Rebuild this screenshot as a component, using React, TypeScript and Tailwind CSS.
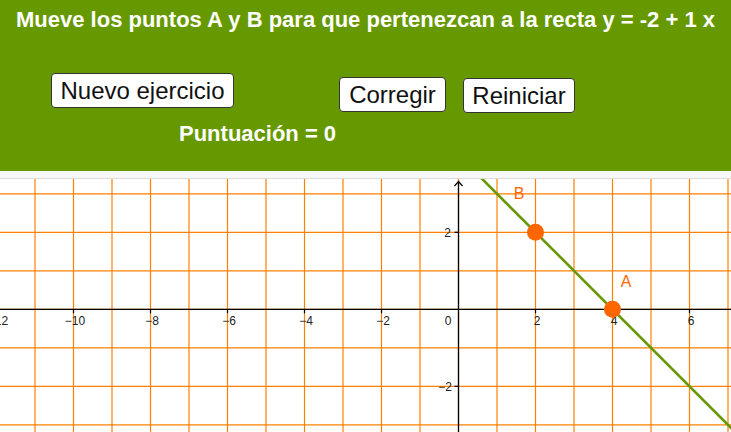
import React from 'react';

const U = 38.5;
const OX = 458.5;
const OY = 130.3;
const H = 253;

const px = (x: number) => OX + x * U;
const py = (y: number) => OY - y * U;

function Graph() {
  const xs = [];
  for (let k = -12; k <= 7; k++) xs.push(k);
  const ys = [];
  for (let k = -3; k <= 3; k++) ys.push(k);
  const xLabels = [-12, -10, -8, -6, -4, -2, 2, 4, 6];
  const yLabels = [2, -2];

  // drawn line through B(2,2) and A(4,0)
  const x1 = -1, x2 = 9;
  const y1 = 4 - x1, y2 = 4 - x2;

  return (
    <svg width="731" height={H} viewBox={`0 0 731 ${H}`} className="block">
      <rect x="0" y="0" width="731" height={H} fill="#ffffff" />
      {xs.map((k) => (
        <line key={'v' + k} x1={px(k)} y1="0" x2={px(k)} y2={H} stroke="#ff8000" strokeWidth="1.2" />
      ))}
      {ys.map((k) => (
        <line key={'h' + k} x1="0" y1={py(k)} x2="731" y2={py(k)} stroke="#ff8000" strokeWidth="1.2" />
      ))}
      {/* axes */}
      <line x1="0" y1={OY} x2="731" y2={OY} stroke="#000" strokeWidth="1.3" />
      <line x1={OX} y1="2" x2={OX} y2={H} stroke="#000" strokeWidth="1.3" />
      <polyline points={`${OX - 4},7 ${OX},2.5 ${OX + 4},7`} fill="none" stroke="#000" strokeWidth="1.2" />
      {xLabels.map((k) => (
        <line key={'tx' + k} x1={px(k)} y1={OY} x2={px(k)} y2={OY + 4} stroke="#000" strokeWidth="1.2" />
      ))}
      {yLabels.map((k) => (
        <line key={'ty' + k} x1={OX - 4} y1={py(k)} x2={OX} y2={py(k)} stroke="#000" strokeWidth="1.2" />
      ))}
      <g fontFamily="'Liberation Sans', Arial, sans-serif" fontSize="12" fill="#222">
        {xLabels.map((k) => (
          <text key={'lx' + k} x={px(k) + 1.5} y={OY + 16} textAnchor="middle">
            {k < 0 ? '\u2212' + Math.abs(k) : String(k)}
          </text>
        ))}
        <text x={OX - 10.5} y={OY + 16} textAnchor="middle">0</text>
        <text x={OX - 7.5} y={py(2) + 4.3} textAnchor="end">2</text>
        <text x={OX - 6.5} y={py(-2) + 4.3} textAnchor="end">{'\u2212'}2</text>
      </g>
      {/* line */}
      <line x1={px(x1)} y1={py(y1)} x2={px(x2)} y2={py(y2)} stroke="#669900" strokeWidth="2.6" />
      {/* points */}
      <circle cx={px(2)} cy={py(2)} r="8.5" fill="#ff6600" />
      <circle cx={px(4)} cy={py(0)} r="8.5" fill="#ff6600" />
      <g fontFamily="'Liberation Sans', Arial, sans-serif" fontSize="16" fill="#ff6600">
        <text x="519" y="19.7" textAnchor="middle">B</text>
        <text x="626" y="107.7" textAnchor="middle">A</text>
      </g>
    </svg>
  );
}

function Btn({ children, className = '' }: { children: React.ReactNode; className?: string }) {
  return (
    <button
      className={
        'h-[35px] px-0 flex items-center justify-center whitespace-nowrap bg-white border border-[#333] rounded-[4px] text-[24px] leading-none text-[#111] ' +
        className
      }
    >
      {children}
    </button>
  );
}

export default function App() {
  return (
    <div className="w-[731px] h-[432px] overflow-hidden bg-white font-['Liberation_Sans',Arial,sans-serif]">
      <div className="h-[171px] bg-[#669900] pt-[7px]">
        <h1 className="text-[22px] leading-[25px] font-bold text-white text-center whitespace-nowrap">
          Mueve los puntos A y B para que pertenezcan a la recta y = -2 + 1 x
        </h1>
        <div className="flex items-start mt-[41px] ml-[51px]">
          <Btn className="w-[183px]">Nuevo ejercicio</Btn>
          <Btn className="w-[107px] ml-[105px] mt-[4px]">Corregir</Btn>
          <Btn className="w-[112px] ml-[17px] mt-[5px]">Reiniciar</Btn>
        </div>
        <div className="ml-[179px] mt-[8px] text-[22px] leading-[26px] font-bold text-white">
          Puntuación = 0
        </div>
      </div>
      <div className="h-[8px] bg-[#f8f8f8] border-b border-[#dcdcdc]" />
      <Graph />
    </div>
  );
}
